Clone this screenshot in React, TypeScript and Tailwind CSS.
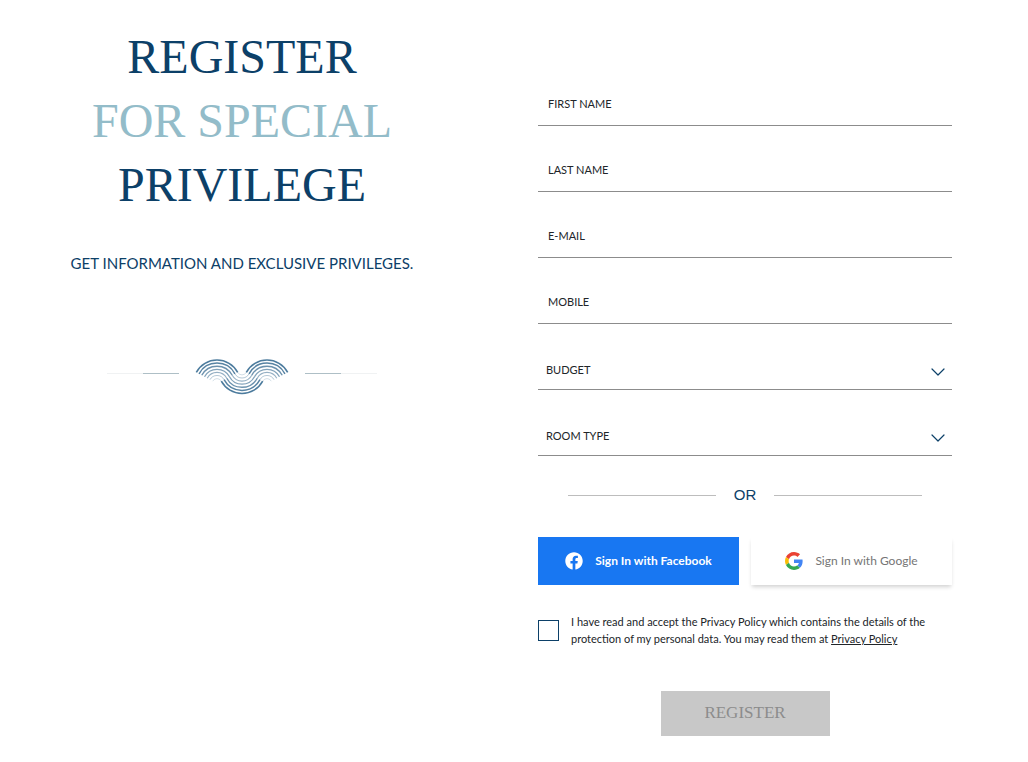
import { useState } from "react"
import { ChevronDown } from "lucide-react"
import { FaFacebook } from "react-icons/fa"

const textFields = [
  { name: "firstName", label: "FIRST NAME", type: "text" },
  { name: "lastName", label: "LAST NAME", type: "text" },
  { name: "email", label: "E-MAIL", type: "email" },
  { name: "mobile", label: "MOBILE", type: "tel" },
]

const selectFields = [
  { name: "budget", label: "BUDGET" },
  { name: "roomType", label: "ROOM TYPE" },
]

// outer ring first, each one thinner and lighter than the last
const rings = [
  { r: 23.5, width: 1.6, opacity: 0.85 },
  { r: 20.4, width: 1.5, opacity: 0.8 },
  { r: 17.3, width: 1.4, opacity: 0.7 },
  { r: 14.2, width: 1.3, opacity: 0.6 },
  { r: 11.1, width: 1.1, opacity: 0.5 },
  { r: 8, width: 0.9, opacity: 0.4 },
  { r: 4.9, width: 0.7, opacity: 0.3 },
]

const arcs = [
  { cx: 22, cy: 24.5, up: true },
  { cx: 72, cy: 24.5, up: true },
  { cx: 47, cy: 11, up: false },
]

const arcPath = (cx: number, cy: number, r: number, up: boolean) => {
  const dx = r * 0.88
  const y = up ? cy - r * 0.475 : cy + r * 0.475
  return `M${cx - dx} ${y}A${r} ${r} 0 0 ${up ? 1 : 0} ${cx + dx} ${y}`
}

const WaveMark = () => (
  <svg viewBox="0 -8 94 44" className="h-11 w-[94px]" fill="none" stroke="#2d648c" aria-hidden="true">
    {arcs.map((arc) =>
      rings.map((ring) => (
        <path
          key={`${arc.cx}-${ring.r}`}
          d={arcPath(arc.cx, arc.cy, ring.r, arc.up)}
          strokeWidth={ring.width}
          strokeOpacity={ring.opacity}
        />
      ))
    )}
  </svg>
)

const GoogleIcon = () => (
  <svg viewBox="0 0 48 48" className="h-[18px] w-[18px] shrink-0" aria-hidden="true">
    <path fill="#EA4335" d="M24 9.5c3.54 0 6.71 1.22 9.21 3.6l6.85-6.85C35.9 2.38 30.47 0 24 0 14.62 0 6.51 5.38 2.56 13.22l7.98 6.19C12.43 13.72 17.74 9.5 24 9.5z" />
    <path fill="#4285F4" d="M46.98 24.55c0-1.57-.15-3.09-.38-4.55H24v9.02h12.94c-.58 2.96-2.26 5.48-4.78 7.18l7.73 6c4.51-4.18 7.09-10.36 7.09-17.65z" />
    <path fill="#FBBC05" d="M10.53 28.59c-.48-1.45-.76-2.99-.76-4.59s.27-3.14.76-4.59l-7.98-6.19C.92 16.46 0 20.12 0 24c0 3.88.92 7.54 2.56 10.78l7.97-6.19z" />
    <path fill="#34A853" d="M24 48c6.48 0 11.93-2.13 15.89-5.81l-7.73-6c-2.15 1.45-4.92 2.3-8.16 2.3-6.26 0-11.57-4.22-13.47-9.91l-7.98 6.19C6.51 42.62 14.62 48 24 48z" />
  </svg>
)

const Intro = () => (
  <section className="flex flex-col items-center text-center text-[#0c4068]">
    <h1 className="font-['Liberation_Serif',serif] text-5xl leading-16 whitespace-nowrap">
      REGISTER
      <span className="block text-[#93bcc9]">FOR SPECIAL</span>
      PRIVILEGE
    </h1>
    <p className="mt-[34px] text-[15px] leading-6 whitespace-nowrap">GET INFORMATION AND EXCLUSIVE PRIVILEGES.</p>

    <div className="mt-19 flex items-center">
      <span className="h-px w-9 bg-[#f0f2f3]" />
      <span className="h-px w-9 bg-[#aebfc6]" />
      <span className="mx-4">
        <WaveMark />
      </span>
      <span className="h-px w-9 bg-[#aebfc6]" />
      <span className="h-px w-9 bg-[#f0f2f3]" />
    </div>
  </section>
)

const RegisterForm = () => {
  const [accepted, setAccepted] = useState(false)

  return (
    <form className="pt-[59px] text-[11px] text-[#212529]" onSubmit={(e) => e.preventDefault()}>
      <div className="flex flex-col gap-6">
        {textFields.map((field) => (
          <input
            key={field.name}
            name={field.name}
            type={field.type}
            placeholder={field.label}
            aria-label={field.label}
            className="h-[42px] w-full border-b border-[#8c8c8c] bg-transparent px-2.5 pb-0.5 outline-none placeholder:text-[#212529]"
          />
        ))}
        {selectFields.map((field) => (
          <div key={field.name} className="relative">
            <select
              name={field.name}
              aria-label={field.label}
              className="block h-[42px] w-full appearance-none border-b border-[#8c8c8c] bg-transparent pt-1 pr-8 pl-2 outline-none"
            >
              <option>{field.label}</option>
            </select>
            <ChevronDown
              className="pointer-events-none absolute top-3 right-0.5 h-6 w-6 text-[#0c4068]"
              strokeWidth={1.2}
              aria-hidden="true"
            />
          </div>
        ))}
      </div>

      <div className="mt-[27px] flex items-center gap-[18px] px-[30px] font-['Liberation_Sans',sans-serif] text-[15px] leading-6 text-[#0c4068]">
        <span className="h-px flex-1 bg-[#bdbdbd]" />
        <span>OR</span>
        <span className="h-px flex-1 bg-[#bdbdbd]" />
      </div>

      <div className="mt-[30px] grid grid-cols-2 gap-3 text-xs">
        <button type="button" className="flex h-12 items-center justify-center gap-3 bg-[#1877f2] font-bold text-white">
          <FaFacebook className="h-[18px] w-[18px] shrink-0" />
          Sign In with Facebook
        </button>
        <button
          type="button"
          className="flex h-12 items-center justify-center gap-3 bg-white text-[#757575] shadow-[0_3px_4px_-1px_rgba(0,0,0,0.18)]"
        >
          <GoogleIcon />
          Sign In with Google
        </button>
      </div>

      <div className="mt-7 flex items-center gap-3">
        <input
          id="accept"
          type="checkbox"
          checked={accepted}
          onChange={(e) => setAccepted(e.target.checked)}
          className="h-[21px] w-[21px] shrink-0 appearance-none border border-[#0c4068] checked:bg-[#0c4068]"
        />
        <p className="leading-[17px]">
          <label htmlFor="accept">
            I have read and accept the Privacy Policy which contains the details of the protection of my personal data.
            You may read them at
          </label>{" "}
          <a href="#privacy" className="underline">
            Privacy Policy
          </a>
        </p>
      </div>

      <button
        type="submit"
        disabled={!accepted}
        className="mx-auto mt-11 block h-[45px] w-[169px] bg-[#c8c8c8] pb-0.5 font-['Liberation_Serif',serif] text-[17px] text-[#8c8c8c]"
      >
        REGISTER
      </button>
    </form>
  )
}

const App = () => {
  return (
    <main className="grid grid-cols-1 gap-[89px] bg-white pt-[25px] pr-19 pb-6 pl-[35px] font-['Lato',sans-serif] md:grid-cols-2">
      <Intro />
      <RegisterForm />
    </main>
  )
}

export default App
